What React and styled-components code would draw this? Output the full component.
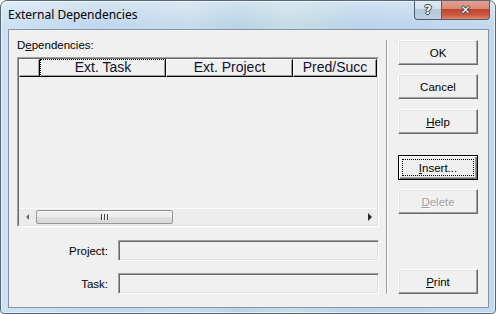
import React from "react";
import styled, { createGlobalStyle } from "styled-components";

const Global = createGlobalStyle`
  html, body { margin: 0; padding: 0; background: #ffffff; }
  * { box-sizing: border-box; }
`;

const Window = styled.div`
  width: 496px;
  height: 314px;
  border: 1px solid #56687a;
  border-radius: 7px 7px 4px 4px;
  display: flex;
  flex-direction: column;
  overflow: hidden;
  background:
    linear-gradient(180deg, rgba(255,255,255,0.35) 0px, rgba(255,255,255,0) 24px),
    linear-gradient(90deg, #cfe2f4 0%, #bfd7ee 20%, #c7dcec 38%, #b9d3e6 48%, #c6dde6 58%, #bad3ea 72%, #c3d9ef 100%);
  box-shadow: inset 0 0 0 1px rgba(255,255,255,0.55);
`;

const TitleBar = styled.div`
  height: 28px;
  flex: none;
  display: flex;
  align-items: flex-start;
  padding-left: 7px;
`;

const Title = styled.div`
  margin-top: 6px;
  font-family: "Noto Sans", "Open Sans", sans-serif;
  font-size: 12px;
  line-height: 16px;
  color: #000;
`;

const Captions = styled.div`
  margin-left: auto;
  margin-right: 5px;
  margin-top: -1px;
  display: flex;
`;

const CapButton = styled.div`
  height: 20px;
  width: ${(p) => p.$w}px;
  display: flex;
  align-items: center;
  justify-content: center;
  border: 1px solid #4f5d6d;
  border-top: none;
  font-family: "DejaVu Sans", sans-serif;
  font-weight: bold;
  color: #fff;
  text-shadow: 0 0 1px #303a45, 1px 0 0 #3a4552, -1px 0 0 #3a4552, 0 1px 0 #3a4552, 0 -1px 0 #3a4552;
  ${(p) =>
    p.$close
      ? `
    border-radius: 0 0 4px 0;
    border-left: none;
    background: linear-gradient(180deg, #e6a494 0%, #d88c78 45%, #c2452f 50%, #cc5a44 80%, #e08a6c 100%);
    font-size: 12px;
    transform-origin: center;
  `
      : `
    border-radius: 0 0 0 4px;
    background: linear-gradient(180deg, #e3ecf4 0%, #d3dfea 45%, #b6c8d8 50%, #bfd0de 100%);
    font-size: 13px;
  `}
`;

const Client = styled.div`
  flex: 1;
  margin: 0 6px 5px 7px;
  border: 1px solid #8593a3;
  background: #f0f0f0;
  display: flex;
  padding: 8px 0 0 8px;
  font-family: "Liberation Sans", Arial, sans-serif;
  font-weight: 400;
`;

const LeftPanel = styled.div`
  width: 362px;
  display: flex;
  flex-direction: column;
`;

const Label = styled.div`
  font-size: 11.5px;
  line-height: 14px;
  height: 14px;
  color: #000;
`;

const GridOuter = styled.div`
  margin-top: 5px;
  height: 170px;
  border: 1px solid;
  border-color: #a0a0a0 #ffffff #ffffff #a0a0a0;
`;

const GridInner = styled.div`
  height: 100%;
  border: 1px solid;
  border-color: #696969 #e3e3e3 #e3e3e3 #696969;
  display: flex;
  flex-direction: column;
  background: #f0f0f0;
`;

const HeaderRow = styled.div`
  height: 18px;
  display: flex;
  flex: none;
`;

const HeaderCell = styled.div`
  width: ${(p) => p.$w}px;
  flex: none;
  height: 18px;
  border-top: 1px solid #fff;
  border-left: 1px solid #fff;
  border-right: 1px solid #000;
  border-bottom: 1px solid #000;
  box-shadow: inset -1px -1px 0 #a0a0a0;
  background: #f0f0f0;
  font-size: 14px;
  line-height: 15px;
  text-align: center;
  color: #101030;
  white-space: nowrap;
  overflow: hidden;
  ${(p) => (p.$focus ? `outline: 1px dotted #000; outline-offset: -1px;` : "")}
`;

const GridBody = styled.div`
  flex: 1;
`;

const HScroll = styled.div`
  height: 17px;
  flex: none;
  display: flex;
  align-items: stretch;
  border-top: 1px solid #fafafa;
  background: #ececec;
`;

const ArrowBox = styled.div`
  width: 17px;
  flex: none;
  display: flex;
  align-items: center;
  justify-content: center;
`;

const Tri = styled.div`
  width: 0;
  height: 0;
  border-top: ${(p) => p.$h}px solid transparent;
  border-bottom: ${(p) => p.$h}px solid transparent;
  ${(p) =>
    p.$dir === "left"
      ? `border-right: ${p.$w}px solid ${p.$c}; margin-left: -1px;`
      : `border-left: ${p.$w}px solid ${p.$c}; margin-left: 2px;`}
`;

const Thumb = styled.div`
  width: 137px;
  flex: none;
  margin: 1px 0 1px 0;
  border: 1px solid #979797;
  border-radius: 2px;
  background: linear-gradient(180deg, #f4f4f4 0%, #ececec 50%, #dedede 51%, #d8d8d8 100%);
  display: flex;
  align-items: center;
  justify-content: center;
  gap: 1px;
`;

const Grip = styled.div`
  width: 1px;
  height: 6px;
  background: #3f3f3f;
  box-shadow: 1px 0 0 #fafafa;
  margin-right: 1px;
`;

const Track = styled.div`
  flex: 1;
`;

const FieldRow = styled.div`
  display: flex;
  align-items: center;
  margin-top: ${(p) => p.$mt}px;
  height: 21px;
`;

const FieldLabel = styled.div`
  width: 91px;
  text-align: right;
  font-size: 11.5px;
  line-height: 14px;
  color: #000;
  margin-right: 10px;
`;

const Field = styled.div`
  flex: 1;
  height: 21px;
  border: 1px solid;
  border-color: #a0a0a0 #ffffff #ffffff #a0a0a0;
  box-shadow: inset 1px 1px 0 #696969, inset -1px -1px 0 #e3e3e3;
  background: #f0f0f0;
`;

const Separator = styled.div`
  margin: 2px 0 0 7px;
  width: 2px;
  height: 254px;
  border-left: 1px solid #a0a0a0;
  border-right: 1px solid #ffffff;
`;

const ButtonCol = styled.div`
  margin: 2px 0 0 10px;
  width: 80px;
  display: flex;
  flex-direction: column;
`;

const Button = styled.div`
  height: 25px;
  margin-top: ${(p) => p.$mt || 0}px;
  display: flex;
  align-items: center;
  justify-content: center;
  font-size: 11.5px;
  font-weight: 400;
  color: ${(p) => (p.$disabled ? "#a0a0a0" : "#000")};
  ${(p) => (p.$disabled ? "text-shadow: 1px 1px 0 #ffffff;" : "")}
  background: #f0f0f0;
  ${(p) =>
    p.$default
      ? `
    border: 1px solid #000;
    box-shadow: inset 1px 1px 0 #ffffff, inset -1px -1px 0 #696969, inset -2px -2px 0 #a0a0a0;
    outline: 1px dotted #000;
    outline-offset: -5px;
  `
      : `
    border: 1px solid;
    border-color: #ffffff #696969 #696969 #ffffff;
    box-shadow: inset -1px -1px 0 #a0a0a0, inset 1px 1px 0 #e3e3e3;
  `}
`;

export default function App() {
  return (
    <>
      <Global />
      <Window>
        <TitleBar>
          <Title>External Dependencies</Title>
          <Captions>
            <CapButton $w={28}>?</CapButton>
            <CapButton $w={48} $close>✕</CapButton>
          </Captions>
        </TitleBar>
        <Client>
          <LeftPanel>
            <Label>
              D<u>e</u>pendencies:
            </Label>
            <GridOuter>
              <GridInner>
                <HeaderRow>
                  <HeaderCell $w={21} />
                  <HeaderCell $w={126} $focus>Ext. Task</HeaderCell>
                  <HeaderCell $w={127}>Ext. Project</HeaderCell>
                  <HeaderCell $w={84}>Pred/Succ</HeaderCell>
                </HeaderRow>
                <GridBody />
                <HScroll>
                  <ArrowBox>
                    <Tri $dir="left" $h={3} $w={3} $c="#6a6a6a" />
                  </ArrowBox>
                  <Thumb>
                    <Grip />
                    <Grip />
                    <Grip />
                  </Thumb>
                  <Track />
                  <ArrowBox>
                    <Tri $dir="right" $h={4} $w={4} $c="#2a2a2a" />
                  </ArrowBox>
                </HScroll>
              </GridInner>
            </GridOuter>
            <FieldRow $mt={13}>
              <FieldLabel>Project:</FieldLabel>
              <Field />
            </FieldRow>
            <FieldRow $mt={12}>
              <FieldLabel>Task:</FieldLabel>
              <Field />
            </FieldRow>
          </LeftPanel>
          <Separator />
          <ButtonCol>
            <Button>OK</Button>
            <Button $mt={9}>Cancel</Button>
            <Button $mt={10}>
              <u>H</u>elp
            </Button>
            <Button $mt={21} $default>
              <u>I</u>nsert...
            </Button>
            <Button $mt={9} $disabled>
              <u>D</u>elete
            </Button>
            <Button $mt={55}>
              <u>P</u>rint
            </Button>
          </ButtonCol>
        </Client>
      </Window>
    </>
  );
}
